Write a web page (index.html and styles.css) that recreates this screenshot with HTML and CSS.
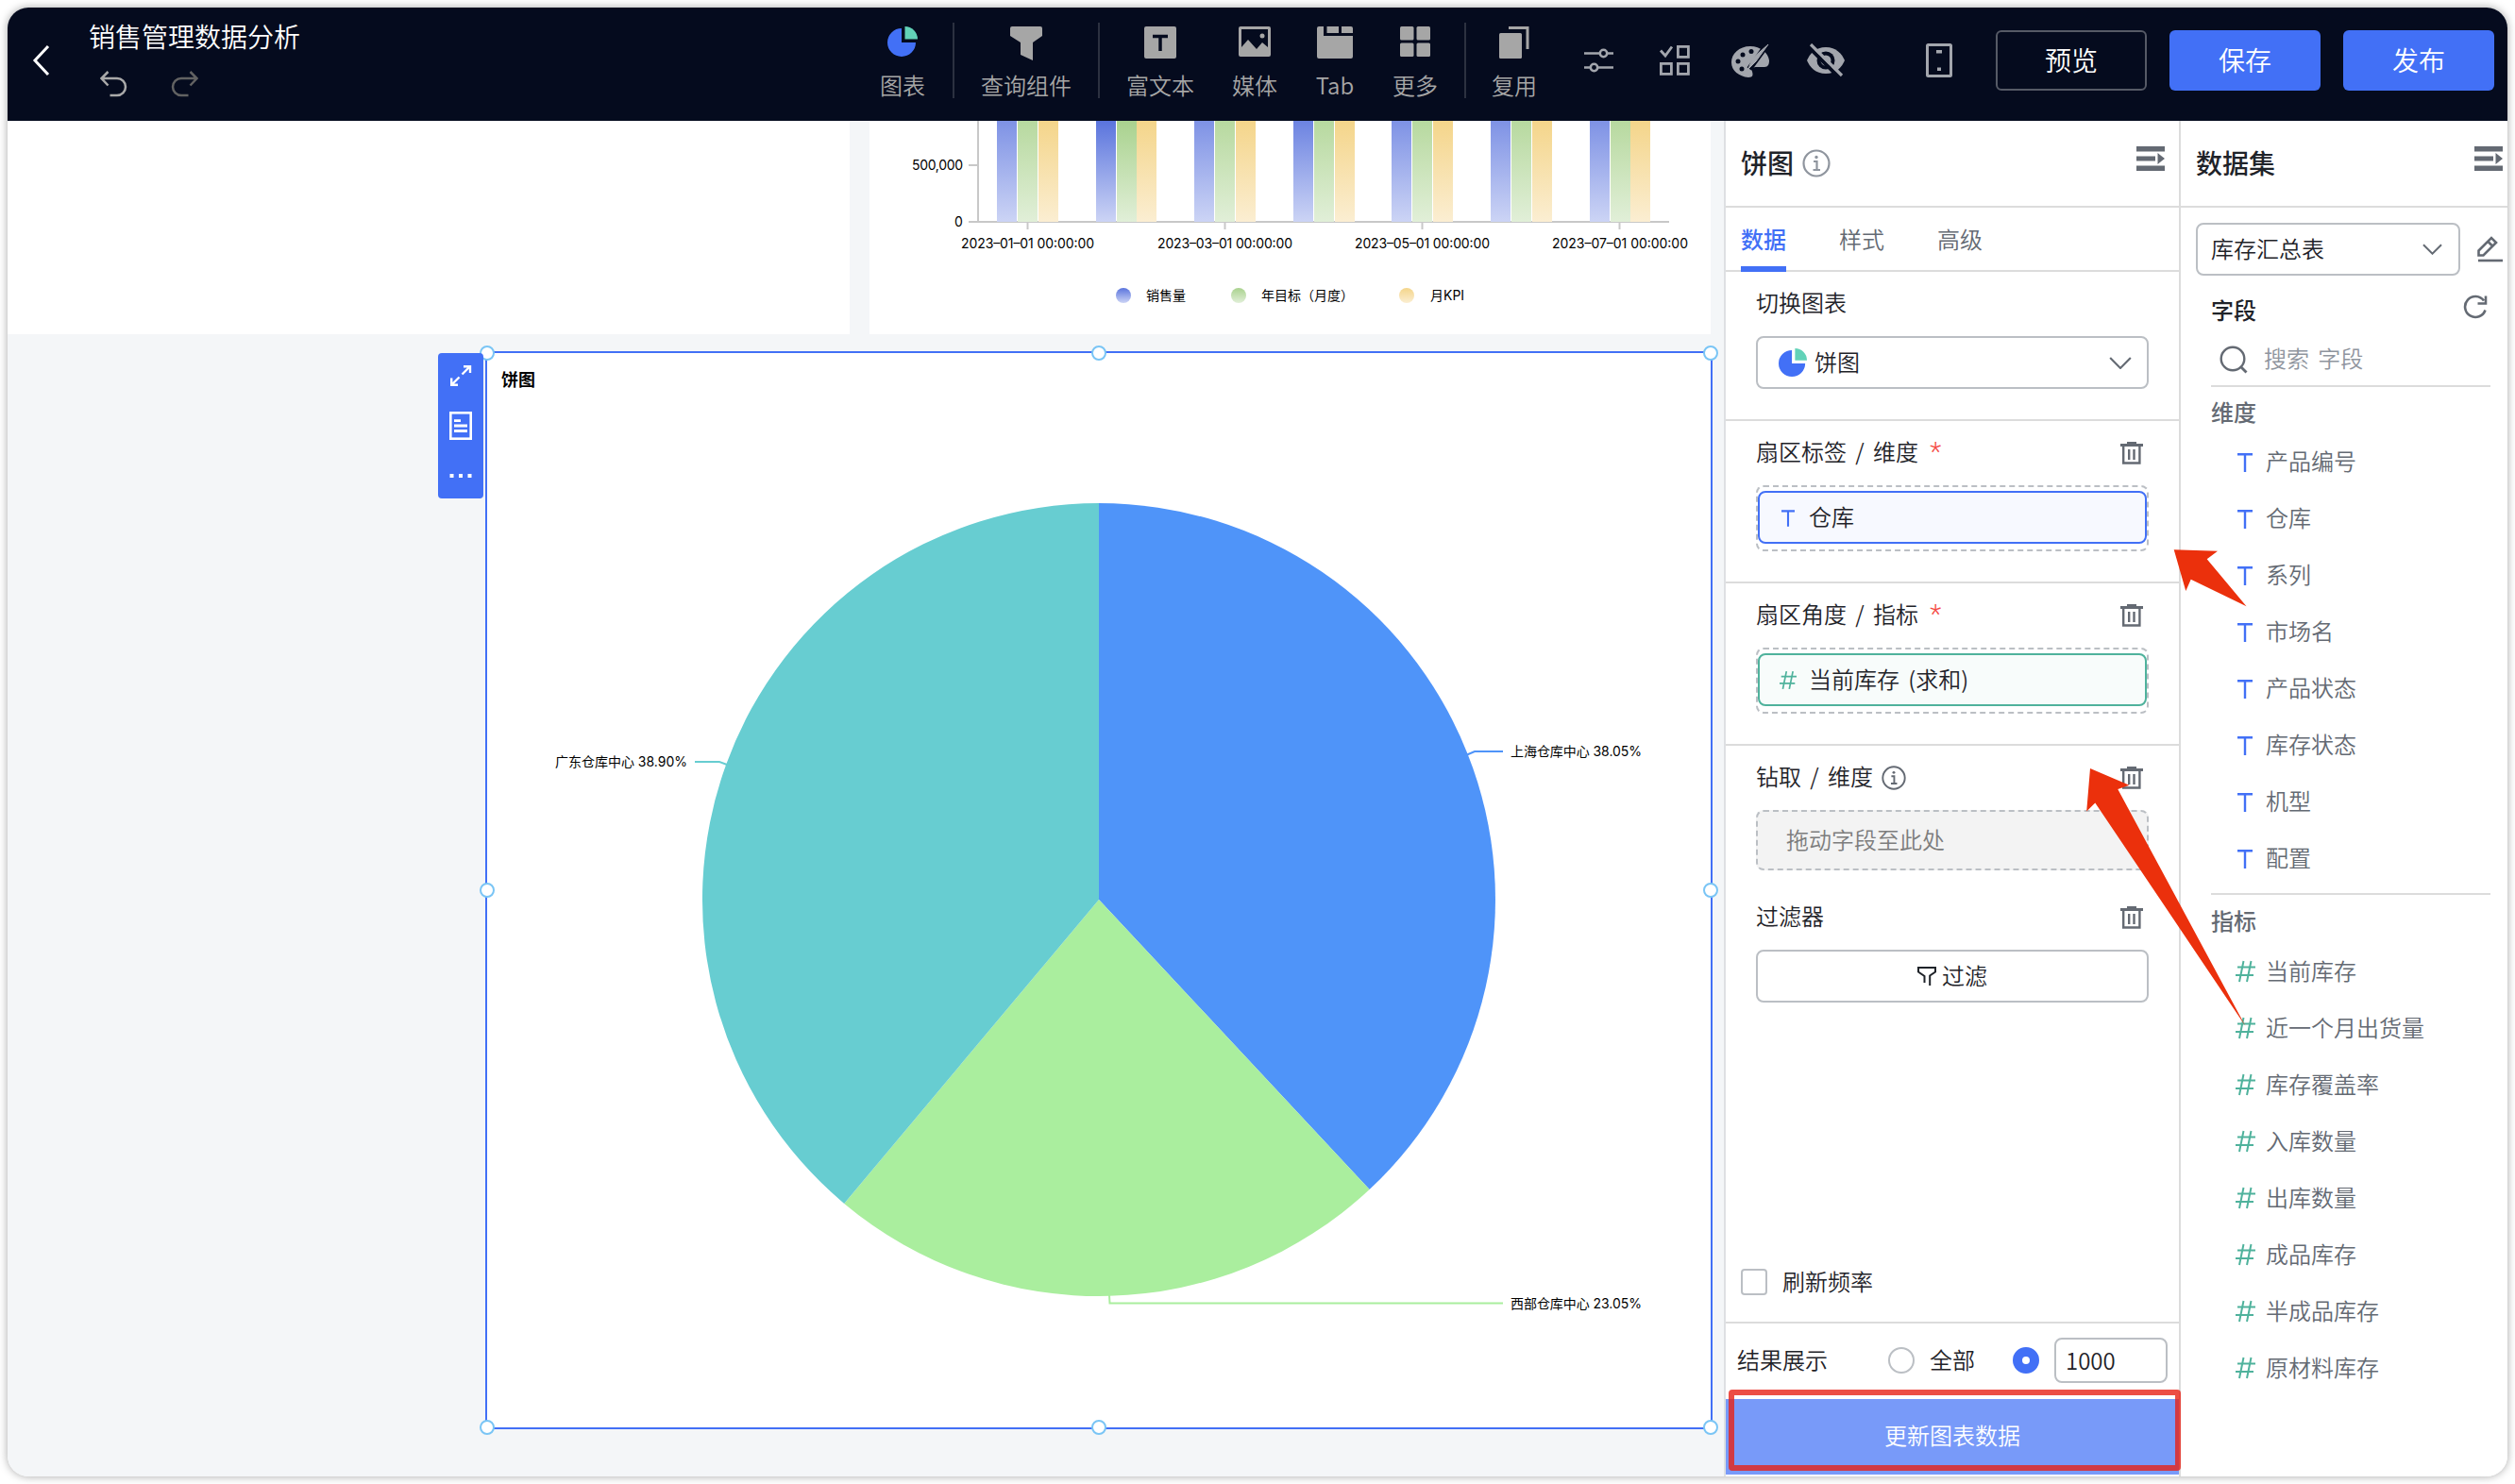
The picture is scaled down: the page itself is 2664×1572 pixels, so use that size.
FILE: index.html
```html
<!DOCTYPE html>
<html lang="zh-CN">
<head>
    <meta charset="UTF-8">
    <meta name="viewport" content="width=device-width, initial-scale=1.0">
    <title>销售管理数据分析</title>
    <link rel="stylesheet" href="styles.css">
</head>
<body>

    <!-- Iconos compartidos -->
    <svg class="sprite" width="0" height="0">
        <symbol id="icon-pie" viewBox="0 0 32 32">
            <path d="M15 2v15h15A15 15 0 1 1 15 2z" fill="#4270f6"/>
            <path d="M18.500 0A13.500 13.500 0 0 1 32 13.500H18.500z" fill="#62d2b8"/>
        </symbol>
        <symbol id="icon-info" viewBox="0 0 30 30">
            <circle cx="15" cy="15" r="13.500" fill="none" stroke="currentColor" stroke-width="2.200"/>
            <circle cx="15" cy="8.500" r="1.700" fill="currentColor"/>
            <path d="M12 13h3.500v8.500M11.500 22h7.500" fill="none" stroke="currentColor" stroke-width="2.200"/>
        </symbol>
        <symbol id="icon-fold" viewBox="0 0 30 26">
            <path d="M0 0h30v5.500H0zM0 10.500h20v5H0zM22.500 7l7.500 6-7.500 6zM0 20.500h30V26H0z" fill="currentColor"/>
        </symbol>
        <symbol id="icon-trash" viewBox="0 0 24 24">
            <path d="M7 0h10v2h7v3H0V2h7z" fill="currentColor"/>
            <path d="M3.200 4v18.500h17.200V4M9.200 8v11M14.500 8v11" fill="none" stroke="currentColor" stroke-width="2.400"/>
        </symbol>
        <symbol id="icon-down" viewBox="0 0 22 12">
            <path d="M1 1l10 10L21 1" fill="none" stroke="currentColor" stroke-width="2"/>
        </symbol>
        <symbol id="icon-text" viewBox="0 0 16 20">
            <path d="M0 1.300h16M8 1v19" fill="none" stroke="#4270f6" stroke-width="2.400"/>
        </symbol>
        <symbol id="icon-number" viewBox="0 0 21 24">
            <path d="M2 7.500h19M0 16h19M8.500 1L4 23M16.500 1L12 23" fill="none" stroke="#4fb29c" stroke-width="2"/>
        </symbol>
    </svg>

    <div class="window">
        <header class="topbar">
            <svg class="back" width="20" height="34" viewBox="0 0 20 34"><path d="M18 2L4 17l14 15" fill="none" stroke="#fff" stroke-width="3"/></svg>
            <div class="heading">
                <h1>销售管理数据分析</h1>
                <div class="history">
                    <svg width="30" height="28" viewBox="0 0 30 28"><path d="M9.500 1L2.500 8l7 7.500M3 8h16a9 9 0 0 1 0 18h-7.500" fill="none" stroke="#a9a9a9" stroke-width="2.500"/></svg>
                    <svg width="30" height="28" viewBox="0 0 30 28"><path d="M20.500 1l7 7-7 7.500M27 8H11a9 9 0 0 0 0 18h7.500" fill="none" stroke="#626262" stroke-width="2.500"/></svg>
                </div>
            </div>

            <nav class="tools">
                <div class="tool w106"><svg width="32" height="32"><use href="#icon-pie"/></svg><span>图表</span></div>
                <i class="sep"></i>
                <div class="tool w152">
                    <svg width="34" height="36" viewBox="0 0 34 36"><path d="M2 0h30q2 0 2 2v8L24 17v19l-13-6V17L0 10V2q0-2 2-2z"/></svg>
                    <span>查询组件</span>
                </div>
                <i class="sep"></i>
                <div class="tool w128">
                    <svg width="34" height="34" viewBox="0 0 34 34"><rect width="34" height="34" rx="2"/><path d="M9 10.500h16M17 10v16" stroke="#050b1e" stroke-width="3.500"/></svg>
                    <span>富文本</span>
                </div>
                <div class="tool w72">
                    <svg width="34" height="32" viewBox="0 0 34 32"><path fill-rule="evenodd" d="M2 0h30q2 0 2 2v28q0 2-2 2H2q-2 0-2-2V2q0-2 2-2zM3 3v19l7-8 9 10 6-7 6 5V3z"/><circle cx="25" cy="10" r="2.500"/></svg>
                    <span>媒体</span>
                </div>
                <div class="tool w98">
                    <svg width="38" height="34" viewBox="0 0 38 34"><path d="M2 0h5v10h31v22q0 2-2 2H2q-2 0-2-2V2q0-2 2-2zM10.500 0H23v7H10.500zM26 0h10q2 0 2 2v5H26z"/></svg>
                    <span>Tab</span>
                </div>
                <div class="tool w72">
                    <svg width="32" height="32" viewBox="0 0 32 32"><rect width="14.500" height="14.500" rx="1.500"/><rect x="17.500" width="14.500" height="14.500" rx="1.500"/><rect y="17.500" width="14.500" height="14.500" rx="1.500"/><rect x="17.500" y="17.500" width="14.500" height="14.500" rx="1.500"/></svg>
                    <span>更多</span>
                </div>
                <i class="sep sep-last"></i>
                <div class="tool w102">
                    <svg width="32" height="34" viewBox="0 0 32 34"><rect y="7" width="24" height="27" rx="1.500"/><path d="M10 1.500h20V24" fill="none" stroke="#a6a6a6" stroke-width="3"/></svg>
                    <span>复用</span>
                </div>
            </nav>

            <div class="quick">
                <svg width="40" height="28" viewBox="0 0 32 28"><g fill="none" stroke="#a3a6ad" stroke-width="2.500"><circle cx="20.500" cy="6.500" r="3.700"/><circle cx="10.500" cy="21.500" r="3.700"/><path d="M0 6.500h17M24 6.500h7M0 21.500h7M14 21.500h17"/></g></svg>
                <svg width="40" height="32" viewBox="0 0 32 32"><g fill="none" stroke="#a3a6ad" stroke-width="2.800"><path d="M1 5.500l5 5.500L13 1.500"/><rect x="19.400" y="1.400" width="11" height="11"/><rect x="1.400" y="19.400" width="11" height="11"/><rect x="19.400" y="19.400" width="11" height="11"/></g></svg>
                <svg width="40" height="36" viewBox="0 0 40 36"><path d="M20 3C8 3 0 11 0 20c0 9 8 15 18 16 5 0 5-3 4-6-1-4 1-5 5-5h8c4 0 5-3 5-7-1-8-9-15-20-15z" fill="#a3a6ad"/><g fill="#050b1e"><circle cx="7" cy="19" r="2.500"/><circle cx="12" cy="12" r="2.500"/><circle cx="21" cy="8.500" r="2.500"/><circle cx="11" cy="27" r="2.500"/></g><path d="M38 1L19 27" stroke="#050b1e" stroke-width="6"/><path d="M39 1L26 19l-8 8 4-11z" fill="#a3a6ad" stroke="#a3a6ad"/></svg>
                <svg width="40" height="36" viewBox="0 0 40 36"><path d="M20 4C9 4 3 11 0 18c3 7 9 14 20 14s17-7 20-14C37 11 31 4 20 4z" fill="#a3a6ad"/><circle cx="20" cy="18" r="9.500" fill="#050b1e"/><circle cx="20" cy="18" r="5.500" fill="#a3a6ad"/><path d="M1 3l33 33" stroke="#050b1e" stroke-width="4"/><path d="M4 1l33 33" stroke="#a3a6ad" stroke-width="3.200"/></svg>
                <svg class="phone" width="40" height="36" viewBox="0 0 28 36"><rect x="1.500" y="1.500" width="25" height="33" rx="1" fill="none" stroke="#a3a6ad" stroke-width="3"/><path d="M11 7h6v3.500h-6zM12 25.500h4V29h-4z" fill="#a3a6ad"/></svg>
            </div>

            <div class="actions">
                <button class="btn btn-outline">预览</button>
                <button class="btn btn-primary">保存</button>
                <button class="btn btn-primary">发布</button>
            </div>
        </header>

        <div class="body">
            <main class="canvas">
                <div class="row">
                    <section class="card card-left"></section>
                    <section class="card card-bars">
                        <!-- Gráfico de barras -->
                        <svg width="891" height="226" viewBox="921 128 891 226">
                            <defs>
                                <linearGradient id="blue" x1="0" y1="0" x2="0" y2="1"><stop offset="0" stop-color="#7e92e5"/><stop offset="1" stop-color="#ccd4f5"/></linearGradient>
                                <linearGradient id="blueMid" x1="0" y1="0" x2="0" y2="1"><stop offset="0" stop-color="#6c83e1"/><stop offset="1" stop-color="#ccd4f5"/></linearGradient>
                                <linearGradient id="blueDark" x1="0" y1="0" x2="0" y2="1"><stop offset="0" stop-color="#5a74dd"/><stop offset="1" stop-color="#ccd4f5"/></linearGradient>
                                <linearGradient id="green" x1="0" y1="0" x2="0" y2="1"><stop offset="0" stop-color="#b7d99f"/><stop offset="1" stop-color="#e1efd8"/></linearGradient>
                                <linearGradient id="greenDark" x1="0" y1="0" x2="0" y2="1"><stop offset="0" stop-color="#a9d28e"/><stop offset="1" stop-color="#e1efd8"/></linearGradient>
                                <linearGradient id="yellow" x1="0" y1="0" x2="0" y2="1"><stop offset="0" stop-color="#f4d58a"/><stop offset="1" stop-color="#fbeed2"/></linearGradient>
                            </defs>
                            <path d="M1036 128v107M1026 175h10M1026 235h742M1088.500 235v8M1297.500 235v8M1506.500 235v8M1715.500 235v8" fill="none" stroke="#c8c8c8" stroke-width="2"/>
                            <g id="bars">
                                <path d="M1056 128h21v107h-21zM1265 128h21v107h-21zM1474 128h21v107h-21zM1579 128h21v107h-21zM1684 128h21v107h-21z" fill="url(#blue)"/>
                                <path d="M1161 128h21v107h-21z" fill="url(#blueDark)"/>
                                <path d="M1370 128h21v107h-21z" fill="url(#blueMid)"/>
                                <path d="M1078 128h21v107h-21zM1287 128h21v107h-21zM1392 128h21v107h-21zM1496 128h21v107h-21zM1601 128h21v107h-21zM1706 128h21v107h-21z" fill="url(#green)"/>
                                <path d="M1183 128h21v107h-21z" fill="url(#greenDark)"/>
                                <path d="M1100 128h21v107h-21zM1204 128h21v107h-21zM1309 128h21v107h-21zM1414 128h21v107h-21zM1518 128h21v107h-21zM1623 128h21v107h-21zM1727 128h21v107h-21z" fill="url(#yellow)"/>
                            </g>
                            <g class="axis">
                                <text x="966" y="180" textLength="54">500,000</text>
                                <text x="1011" y="240">0</text>
                                <text x="1018" y="263" textLength="141">2023–01–01 00:00:00</text>
                                <text x="1226" y="263" textLength="143">2023–03–01 00:00:00</text>
                                <text x="1435" y="263" textLength="143">2023–05–01 00:00:00</text>
                                <text x="1644" y="263" textLength="144">2023–07–01 00:00:00</text>
                                <text x="1214" y="318">销售量</text>
                                <text x="1336" y="318">年目标（月度）</text>
                                <text x="1515" y="318">月KPI</text>
                            </g>
                            <circle cx="1190" cy="313" r="8" fill="url(#blueDark)"/>
                            <circle cx="1312" cy="313" r="8" fill="url(#greenDark)"/>
                            <circle cx="1490" cy="313" r="8" fill="url(#yellow)"/>
                        </svg>
                    </section>
                </div>

                <section class="widget">
                    <h3>饼图</h3>
                    <!-- Gráfico circular -->
                    <svg class="pie" width="1296" height="1080" viewBox="516 420 1296 1080">
                        <path d="M1164 953V533A420 420 0 0 1 1450.600 1260z" fill="#4f94f9"/>
                        <path d="M1164 953L1450.600 1260A420 420 0 0 1 894.200 1274.900z" fill="#aaee9e"/>
                        <path d="M1164 953L894.200 1274.900A420 420 0 0 1 1164 533z" fill="#67cdd1"/>
                        <path d="M1554 799.500l8-3.500h30" fill="none" stroke="#4f94f9" stroke-width="2"/>
                        <path d="M1175 1372l.500 8.500H1592" fill="none" stroke="#aaee9e" stroke-width="2"/>
                        <path d="M736 807h26l8 3" fill="none" stroke="#67cdd1" stroke-width="2"/>
                        <g class="pie-label">
                            <text x="588" y="812" textLength="140">广东仓库中心 38.90%</text>
                            <text x="1600" y="801" textLength="139">上海仓库中心 38.05%</text>
                            <text x="1600" y="1386" textLength="139">西部仓库中心 23.05%</text>
                        </g>
                    </svg>
                    <i class="handle nw"></i><i class="handle n"></i><i class="handle ne"></i>
                    <i class="handle w"></i><i class="handle e"></i>
                    <i class="handle sw"></i><i class="handle s"></i><i class="handle se"></i>
                    <div class="widget-tools">
                        <svg width="24" height="24" viewBox="0 0 24 24"><path d="M15 2.200h7V9M21.500 2.500l-8 8M2.200 14.500v7.300H9M2.500 21.500l8-8" fill="none" stroke="#fff" stroke-width="2.400"/></svg>
                        <svg width="24" height="30" viewBox="0 0 24 30"><rect x="1.300" y="1.300" width="21.400" height="27.400" fill="none" stroke="#fff" stroke-width="2.600"/><path d="M5 9.700h7M5 15h14M5 20.500h14" stroke="#fff" stroke-width="2.800"/></svg>
                        <svg class="dots" width="24" height="4" viewBox="0 0 24 4"><path d="M.500 0h4v4h-4zM10 0h4v4h-4zM19.500 0h4v4h-4z" fill="#fff"/></svg>
                    </div>
                </section>
            </main>

            <aside class="panel config">
                <div class="panel-head">
                    <h2>饼图</h2>
                    <svg class="info-light" width="30" height="30"><use href="#icon-info"/></svg>
                    <svg class="fold" width="30" height="26"><use href="#icon-fold"/></svg>
                </div>
                <div class="tabs">
                    <span class="tab active">数据</span>
                    <span class="tab">样式</span>
                    <span class="tab">高级</span>
                </div>

                <div class="group group-chart">
                    <div class="label">切换图表</div>
                    <div class="select">
                        <svg width="30" height="30"><use href="#icon-pie"/></svg>
                        <span>饼图</span>
                        <svg class="arrow" width="24" height="13"><use href="#icon-down"/></svg>
                    </div>
                </div>

                <div class="group">
                    <div class="label">扇区标签 / 维度<em>*</em><svg class="trash" width="24" height="24"><use href="#icon-trash"/></svg></div>
                    <div class="drop">
                        <div class="chip chip-blue"><svg width="14" height="18"><use href="#icon-text"/></svg><span>仓库</span></div>
                    </div>
                </div>

                <div class="group">
                    <div class="label">扇区角度 / 指标<em>*</em><svg class="trash" width="24" height="24"><use href="#icon-trash"/></svg></div>
                    <div class="drop">
                        <div class="chip chip-green"><svg width="18" height="21"><use href="#icon-number"/></svg><span>当前库存 (求和)</span></div>
                    </div>
                </div>

                <div class="group group-last">
                    <div class="label">钻取 / 维度<svg class="info" width="26" height="26"><use href="#icon-info"/></svg><svg class="trash" width="24" height="24"><use href="#icon-trash"/></svg></div>
                    <div class="drop drop-empty">拖动字段至此处</div>
                    <div class="label label-filter">过滤器<svg class="trash" width="24" height="24"><use href="#icon-trash"/></svg></div>
                    <div class="select filter">
                        <svg width="20" height="20" viewBox="0 0 20 20"><path d="M7.500 17V10L1 5.500V1h18v4.500L13.200 9.500V20" fill="none" stroke="#1f2329" stroke-width="2"/></svg>
                        <span>过滤</span>
                    </div>
                </div>

                <div class="refresh"><i class="checkbox"></i><span>刷新频率</span></div>
                <div class="result">
                    <span>结果展示</span>
                    <i class="radio"></i>
                    <span>全部</span>
                    <i class="radio checked"></i>
                    <div class="limit">1000</div>
                </div>
                <div class="update">更新图表数据<i class="mark"></i></div>
            </aside>

            <aside class="panel dataset">
                <div class="panel-head">
                    <h2>数据集</h2>
                    <svg class="fold" width="30" height="26"><use href="#icon-fold"/></svg>
                </div>
                <div class="source">
                    <div class="select">
                        <span>库存汇总表</span>
                        <svg class="arrow" width="21" height="12"><use href="#icon-down"/></svg>
                    </div>
                    <svg width="27" height="28" viewBox="0 0 27 28"><path d="M1.500 15.500L15 2l5 5L6.500 20.500h-5zM11.500 6l5 5" fill="none" stroke="#646a73" stroke-width="2.600"/><path d="M1 26h26" stroke="#646a73" stroke-width="2.600"/></svg>
                </div>
                <div class="fields-title">
                    字段
                    <svg width="26" height="26" viewBox="0 0 26 26"><path d="M23.500 16.500A11 11 0 1 1 22 6.500M24 1.500V9.500h-8.500" fill="none" stroke="#646a73" stroke-width="2.600"/></svg>
                </div>
                <div class="search">
                    <svg width="30" height="30" viewBox="0 0 30 30"><circle cx="14" cy="14" r="12.300" fill="none" stroke="#646a73" stroke-width="2.400"/><path d="M22.500 22.500l6 6" stroke="#646a73" stroke-width="2.800"/></svg>
                    <span>搜索 字段</span>
                </div>
                <h4>维度</h4>
                <ul class="fields">
                    <li><svg width="16" height="20"><use href="#icon-text"/></svg>产品编号</li>
                    <li><svg width="16" height="20"><use href="#icon-text"/></svg>仓库</li>
                    <li><svg width="16" height="20"><use href="#icon-text"/></svg>系列</li>
                    <li><svg width="16" height="20"><use href="#icon-text"/></svg>市场名</li>
                    <li><svg width="16" height="20"><use href="#icon-text"/></svg>产品状态</li>
                    <li><svg width="16" height="20"><use href="#icon-text"/></svg>库存状态</li>
                    <li><svg width="16" height="20"><use href="#icon-text"/></svg>机型</li>
                    <li><svg width="16" height="20"><use href="#icon-text"/></svg>配置</li>
                </ul>
                <h4 class="metrics">指标</h4>
                <ul class="fields">
                    <li><svg width="21" height="24"><use href="#icon-number"/></svg>当前库存</li>
                    <li><svg width="21" height="24"><use href="#icon-number"/></svg>近一个月出货量</li>
                    <li><svg width="21" height="24"><use href="#icon-number"/></svg>库存覆盖率</li>
                    <li><svg width="21" height="24"><use href="#icon-number"/></svg>入库数量</li>
                    <li><svg width="21" height="24"><use href="#icon-number"/></svg>出库数量</li>
                    <li><svg width="21" height="24"><use href="#icon-number"/></svg>成品库存</li>
                    <li><svg width="21" height="24"><use href="#icon-number"/></svg>半成品库存</li>
                    <li><svg width="21" height="24"><use href="#icon-number"/></svg>原材料库存</li>
                </ul>
            </aside>
        </div>
    </div>

    <!-- Flechas de ayuda sobre la pantalla -->
    <svg class="arrows" width="2664" height="1572" viewBox="0 0 2664 1572">
        <path d="M2302.700 582.300L2349 583.700 2337.700 592.300 2379.500 642.200 2320.700 613.700 2315.300 626z" fill="#eb300c"/>
        <path d="M2214 814L2255.500 831.700 2243.300 836 2378.500 1087 2219.300 850.500 2210.200 859.500z" fill="#eb300c"/>
    </svg>

</body>
</html>
```

FILE: styles.css
```css
* {
    box-sizing: border-box;
}
body {
    margin: 0;
    padding: 8px;
    background-color: #fff;
    font-family: "Noto Sans CJK SC", sans-serif;
    font-size: 24px;
    font-weight: 350;
    color: #1f2329;
    overflow: hidden;
}
h1, h2, h3, h4, ul {
    margin: 0;
    padding: 0;
    list-style: none;
}
svg {
    flex: none;
}
.sprite {
    position: absolute;
}
.window {
    width: 2648px;
    height: 1556px;
    border-radius: 22px;
    overflow: hidden;
    box-shadow: 0 0 10px rgba(0,0,0,0.35);
    background-color: #fff;
}

/* Barra superior */
.topbar {
    display: flex;
    height: 120px;
    background-color: #050b1e;
    color: #a6a6a6;
}
.back {
    margin: 39px 0 0 25px;
}
.heading {
    width: 850px;
    padding: 10px 0 0 41px;
}
.heading h1 {
    color: #fff;
    font-size: 28px;
    font-weight: 350;
    line-height: 40px;
}
.history {
    display: flex;
    gap: 46px;
    padding: 17px 0 0 11px;
}
.tools, .quick, .actions {
    display: flex;
    flex: none;
}
.tool {
    display: flex;
    flex-direction: column;
    align-items: center;
    padding-top: 20px;
    line-height: 24px;
    fill: #a6a6a6;
}
.tool span {
    margin-top: auto;
    margin-bottom: 26px;
}
.w72 { width: 72px; }
.w98 { width: 98px; }
.w102 { width: 102px; }
.w106 { width: 106px; }
.w128 { width: 128px; }
.w152 { width: 152px; }
.sep {
    width: 2px;
    height: 80px;
    margin-top: 16px;
    background-color: #2c3140;
}
.sep-last {
    margin-left: 16px;
}
.quick {
    align-items: center;
    gap: 40px;
    height: 112px;
    padding: 0 40px 0 19px;
}
.quick .phone {
    margin-left: 40px;
}
.actions {
    gap: 24px;
    padding-top: 24px;
}
.btn {
    width: 160px;
    height: 64px;
    padding: 0 0 2px;
    border: none;
    border-radius: 6px;
    font: inherit;
    font-size: 28px;
    color: #fff;
}
.btn-outline {
    background: none;
    border: 2px solid #565a66;
}
.btn-primary {
    background-color: #4270f6;
}

/* Lienzo */
.body {
    display: flex;
    height: 1436px;
}
.canvas {
    width: 1818px;
    background-color: #f4f6f8;
}
.row {
    display: flex;
    gap: 21px;
    height: 226px;
}
.card {
    width: 891px;
    background-color: #fff;
}
.card-left {
    width: 892px;
}
.card svg {
    display: block;
}
.axis, .pie-label {
    font-family: Inter, "Noto Sans CJK SC", sans-serif;
    font-size: 14px;
    font-weight: 400;
    fill: #000;
}
.widget {
    position: relative;
    width: 1300px;
    height: 1142px;
    margin: 18px 0 0 506px;
    border: 2px solid #4270f6;
    background-color: #fff;
}
.widget h3 {
    padding: 13px 0 0 15px;
    height: 46px;
    font-size: 18px;
    line-height: 28px;
    font-weight: 700;
    color: #000;
}
.pie {
    display: block;
}
.handle {
    position: absolute;
    width: 16px;
    height: 16px;
    margin: -8px;
    border: 2px solid #7ac5f5;
    border-radius: 50%;
    background-color: #fff;
}
.nw, .n, .ne { top: 0; }
.w, .e { top: 50%; }
.sw, .s, .se { top: 100%; }
.nw, .w, .sw { left: 0; }
.n, .s { left: 50%; }
.ne, .e, .se { left: 100%; }
.widget-tools {
    position: absolute;
    top: 0;
    left: -52px;
    display: flex;
    flex-direction: column;
    align-items: center;
    gap: 26px;
    width: 48px;
    height: 154px;
    padding-top: 12px;
    border-radius: 4px;
    background-color: #4270f6;
}
.widget-tools .dots {
    margin-top: 10px;
}

/* Paneles */
.panel {
    display: flex;
    flex-direction: column;
    background-color: #fff;
    word-spacing: 4px;
}
.config {
    width: 484px;
    border-left: 2px solid #dee0e3;
    border-right: 2px solid #dcdcdc;
}
.dataset {
    width: 346px;
}
.panel-head {
    display: flex;
    align-items: center;
    height: 92px;
    padding-left: 16px;
    border-bottom: 2px solid #dcdcdc;
}
.panel-head h2 {
    margin-top: -3px;
    font-size: 28px;
    font-weight: 500;
}
.info-light {
    margin-left: 9px;
    color: #8f959e;
}
.fold {
    margin: -10px 15px 0 auto;
    color: #646a73;
}
.dataset .fold {
    margin-right: 5px;
}
.tabs {
    display: flex;
    gap: 56px;
    height: 68px;
    padding-left: 16px;
    border-bottom: 2px solid #dcdcdc;
    line-height: 66px;
    color: #646a73;
}
.tab {
    height: 68px;
}
.tab.active {
    color: #4270f6;
    font-weight: 500;
    border-bottom: 6px solid #4270f6;
}
.group {
    height: 172px;
    padding: 15px 32px 0;
    border-bottom: 2px solid #dcdcdc;
}
.group-chart {
    height: 158px;
}
.group-last {
    flex: 1;
    height: auto;
    border: none;
}
.label {
    display: flex;
    align-items: center;
    height: 36px;
    margin-bottom: 17px;
    padding-bottom: 3px;
    white-space: pre;
}
.label em {
    font-family: Roboto, sans-serif;
    font-size: 28px;
    font-style: normal;
    line-height: 28px;
    color: #f54a45;
    margin: 2px 0 0 12px;
}
.trash {
    margin: 5px 6px 0 auto;
    color: #646a73;
}
.info {
    margin: 4px 0 0 9px;
    color: #646a73;
}
.select {
    display: flex;
    align-items: center;
    height: 56px;
    padding: 0 16px 3px 22px;
    border: 2px solid #bbbfc4;
    border-radius: 8px;
}
.select svg {
    margin-top: 3px;
}
.select span {
    margin-left: 8px;
}
.select .arrow {
    margin-left: auto;
    color: #646a73;
}
.drop {
    height: 70px;
    padding: 4px 0;
    border: 2px dashed #bbbfc4;
    border-radius: 8px;
}
.chip {
    display: flex;
    align-items: center;
    height: 56px;
    padding: 0 0 3px 23px;
    border: 2px solid #4270f6;
    border-radius: 8px;
    background-color: #f7f9ff;
}
.chip svg {
    margin-top: 4px;
}
.chip span {
    margin-left: 15px;
}
.chip-green {
    padding-left: 21px;
    border-color: #4fb29c;
    background-color: #f8fcfb;
}
.chip-green span {
    margin-left: 13px;
}
.drop-empty {
    height: 64px;
    padding: 0 30px;
    line-height: 58px;
    background-color: #f3f3f3;
    color: #7d7d7d;
}
.label-filter {
    margin-top: 31px;
}
.filter {
    justify-content: center;
    padding: 0 0 3px;
}
.filter span {
    margin-left: 6px;
}
.refresh {
    display: flex;
    align-items: center;
    gap: 16px;
    height: 86px;
    padding-left: 16px;
    border-bottom: 2px solid #dcdcdc;
}
.refresh span, .result span {
    margin-top: -3px;
}
.checkbox {
    width: 28px;
    height: 28px;
    border: 2px solid #bbbfc4;
    border-radius: 4px;
}
.result {
    display: flex;
    align-items: center;
    height: 80px;
    padding: 0 12px 2px;
}
.radio {
    width: 28px;
    height: 28px;
    margin: 0 16px 0 64px;
    border: 2px solid #bbbfc4;
    border-radius: 50%;
}
.radio.checked {
    margin-left: 40px;
    border: 10px solid #4270f6;
}
.limit {
    width: 120px;
    height: 48px;
    padding-left: 10px;
    border: 2px solid #bbbfc4;
    border-radius: 8px;
    line-height: 43px;
}
.update {
    position: relative;
    height: 80px;
    margin-bottom: 2px;
    background-color: #789af9;
    color: #fff;
    line-height: 76px;
    text-align: center;
}
.mark {
    position: absolute;
    top: -10px;
    left: 3px;
    width: 479px;
    height: 86px;
    border: 6px solid rgba(231,34,22,0.8);
    border-radius: 4px;
}

/* Conjunto de datos */
.source {
    display: flex;
    align-items: center;
    justify-content: space-between;
    padding: 16px 5px 0 16px;
}
.source .select {
    width: 280px;
    padding: 0 17px 3px 6px;
}
.fields-title {
    display: flex;
    align-items: center;
    justify-content: space-between;
    height: 72px;
    padding: 0 21px 2px 32px;
    font-weight: 500;
}
.fields-title svg {
    margin-top: -4px;
}
.search {
    display: flex;
    align-items: center;
    gap: 17px;
    height: 54px;
    margin: -8px 18px 0 32px;
    padding: 0 0 12px 9px;
    border-bottom: 2px solid #dcdcdc;
    color: #8f959e;
}
.search svg {
    margin-top: 9px;
}
.search span {
    margin-top: 4px;
}
.dataset h4 {
    height: 49px;
    padding-left: 32px;
    font-size: 24px;
    font-weight: 500;
    line-height: 51px;
    color: #646a73;
}
.dataset .metrics {
    height: 53px;
    margin: 7px 18px 0 32px;
    padding: 0;
    border-top: 2px solid #dcdcdc;
    line-height: 53px;
}
.fields li {
    display: flex;
    align-items: center;
    height: 60px;
    padding: 0 0 3px 60px;
    color: #646a73;
}
.fields svg {
    margin: 5px 14px 0 0;
}
.metrics + .fields li {
    padding-left: 58px;
}
.metrics + .fields svg {
    margin: 3px 11px 0 0;
}

.arrows {
    position: absolute;
    top: 0;
    left: 0;
}
```
